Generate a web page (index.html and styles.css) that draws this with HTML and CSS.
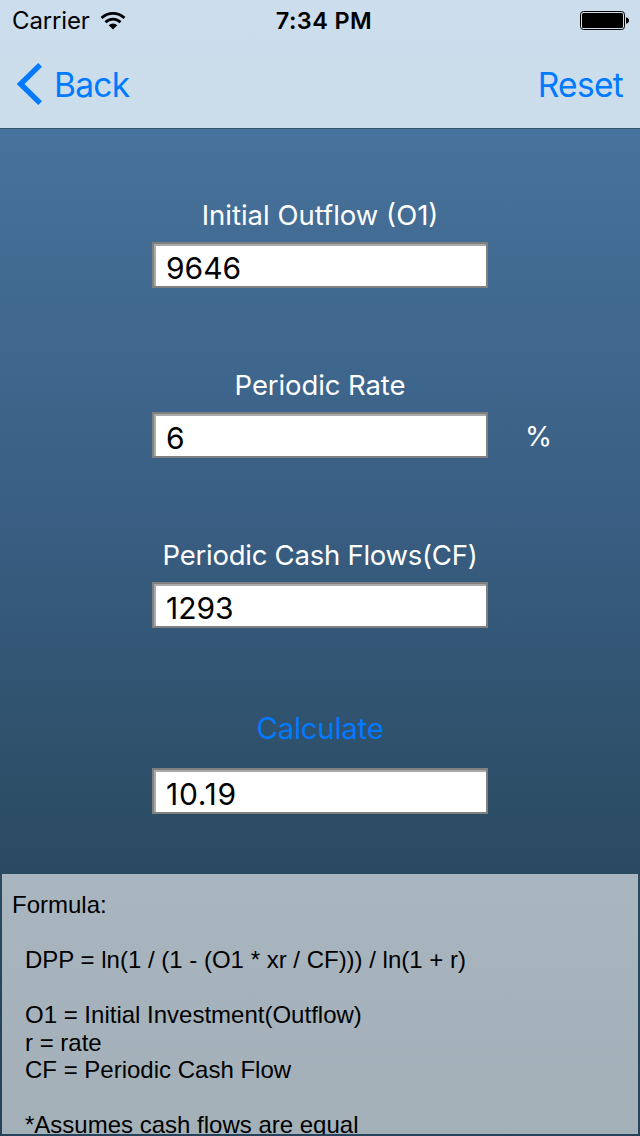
FILE: index.html
```html
<!DOCTYPE html>
<html lang="en">
<head>
    <meta charset="UTF-8">
    <meta name="viewport" content="width=device-width, initial-scale=1.0">
    <title>Discounted Payback Period</title>
    <link rel="stylesheet" href="styles.css">
</head>
<body>
    <header>
        <div class="status-bar">
            <div class="carrier">
                <span class="carrier-name">Carrier</span>
                <svg class="wifi" width="26" height="20" viewBox="0 0 26 20">
                    <g fill="none" stroke="#000" stroke-width="2.8">
                        <path d="M1.6 7.1a16.2 16.2 0 0 1 22.8 0"/>
                        <path d="M5.5 11.2a10.6 10.6 0 0 1 15 0"/>
                    </g>
                    <path d="M13 18.6L8.7 14.2a6.1 6.1 0 0 1 8.6 0z"/>
                </svg>
            </div>
            <span class="time">7:34 PM</span>
            <svg class="battery" width="50" height="20" viewBox="0 0 50 20">
                <rect x="0.5" y="0.5" width="44" height="18" rx="3" fill="none" stroke="#000"/>
                <rect x="2" y="2" width="41" height="15" rx="1.5"/>
                <path d="M46 6.2c2 .4 3 1.7 3 3.3s-1 2.9-3 3.3z"/>
            </svg>
        </div>
        <nav>
            <a href="#" class="back">
                <svg width="26" height="42" viewBox="0 0 26 42">
                    <path d="M24.1 1.9L4.6 21l19.5 19.1" fill="none" stroke="#007aff" stroke-width="5.4"/>
                </svg>
                <span class="back-text">Back</span>
            </a>
            <a href="#" class="reset">Reset</a>
        </nav>
    </header>

    <form class="calculator">
        <div class="field">
            <label for="outflow">Initial Outflow (O1)</label>
            <input type="text" id="outflow" value="9646">
        </div>
        <div class="field">
            <label for="rate" class="rate-label">Periodic Rate</label>
            <input type="text" id="rate" value="6">
            <span class="unit">%</span>
        </div>
        <div class="field">
            <label for="cashFlow" class="cash-label">Periodic Cash Flows(CF)</label>
            <input type="text" id="cashFlow" value="1293">
        </div>
        <div class="field result">
            <button type="button">Calculate</button>
            <input type="text" id="result" value="10.19">
        </div>
    </form>

    <div class="formula">
        <p>Formula:</p>
        <p class="indent">DPP = ln(1 / (1 - (O1 * xr / CF))) / ln(1 + r)</p>
        <p class="indent">O1 = Initial Investment(Outflow)<br>r = rate<br>CF = Periodic Cash Flow</p>
        <p class="indent">*Assumes cash flows are equal</p>
    </div>
</body>
</html>
```

FILE: styles.css
```css
* {
    box-sizing: border-box;
}

body {
    font-family: Inter, "Liberation Sans", sans-serif;
    margin: 0;
    height: 1136px;
    display: flex;
    flex-direction: column;
    background: linear-gradient(#4a77a2 0, #47729b 130px, #3a5f84 500px, #294a60 870px, #25435a 1136px);
    overflow: hidden;
}

header {
    height: 129px;
    flex: none;
    background: linear-gradient(#ccdded, #cbddea);
    border-bottom: 1px solid #34536d;
}

.status-bar {
    height: 40px;
    padding: 1px 10px 0 12px;
    display: grid;
    grid-template-columns: 1fr auto 1fr;
    align-items: center;
    font-size: 24px;
    line-height: 40px;
}

.carrier {
    display: flex;
    align-items: center;
    gap: 10px;
}

.carrier-name {
    letter-spacing: -0.15px;
}

.time {
    padding-left: 6px;
    font-weight: 600;
    font-size: 23.5px;
    letter-spacing: 0.4px;
}

.battery {
    justify-self: end;
}

nav {
    height: 88px;
    padding: 0 17px 0 16px;
    display: flex;
    justify-content: space-between;
    align-items: center;
    font-size: 33.5px;
    letter-spacing: -0.7px;
}

nav a {
    color: #007aff;
    text-decoration: none;
}

.back {
    display: flex;
    align-items: center;
    gap: 12px;
}

.back-text,
.reset {
    padding-top: 1px;
}

.calculator {
    height: 745px;
    flex: none;
    padding-top: 66px;
}

.field {
    height: 170px;
    display: grid;
    grid-template-columns: 152px 336px 1fr;
    grid-template-rows: 47px 46px;
}

.field label {
    grid-column: 2;
    justify-self: center;
    color: white;
    font-size: 27.5px;
    line-height: 40px;
    white-space: nowrap;
}

.field .cash-label {
    letter-spacing: -0.25px;
}

.field .rate-label {
    letter-spacing: -0.1px;
}

.field input {
    grid-column: 2;
    grid-row: 2;
    width: 336px;
    height: 46px;
    padding: 5px 12px 0;
    border: 2px solid #808080;
    border-radius: 0;
    box-shadow: inset 2px 2px #aaa;
    background-color: white;
    color: black;
    font-family: inherit;
    font-size: 30px;
    outline: none;
}

.unit {
    grid-column: 3;
    grid-row: 2;
    padding-left: 37px;
    color: white;
    font-size: 27.5px;
    line-height: 48px;
}

.result {
    padding-top: 9px;
    grid-template-rows: 54px 46px;
}

.result button {
    grid-column: 2;
    justify-self: center;
    align-self: start;
    height: 36px;
    margin-top: -4px;
    padding: 0;
    border: none;
    background: none;
    color: #007aff;
    font-family: inherit;
    font-size: 29.5px;
    letter-spacing: -0.3px;
    cursor: pointer;
}

.field #result {
    letter-spacing: 0.7px;
}

.formula {
    height: 260px;
    margin: 0 2px;
    padding: 17px 10px 0;
    overflow: hidden;
    background: linear-gradient(#a9b5bf, #a4b0b8);
    color: black;
    font-family: "Liberation Sans", Arial, sans-serif;
    font-size: 24px;
    line-height: 27.5px;
}

.formula p {
    margin: 0 0 27.5px;
}

.formula .indent {
    padding-left: 13px;
}
```
